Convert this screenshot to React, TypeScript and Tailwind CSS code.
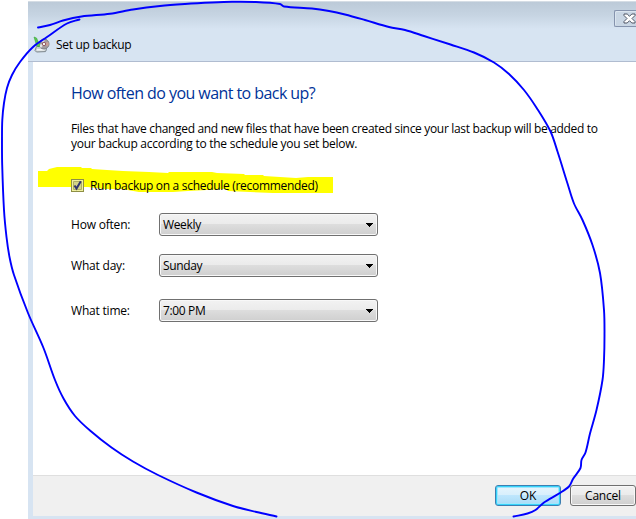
import React from "react";

type Point = [number, number];

const outerStroke: Point[] = [
  [38, 27.5], [50, 25], [63, 20.5], [81.5, 16.5], [110, 13.7], [133, 9.5], [160, 6], [185, 4], [212, 2.5],
  [232, 1.8], [255, 2], [280, 4], [284, 6.5], [312, 8.5], [329, 11], [345, 14.5], [365, 20], [389, 27],
  [405, 30], [424, 36], [450.5, 44.5], [474, 52.5], [494, 62.5], [509, 74], [524, 90], [537, 108.5],
  [550.5, 131.5], [557.5, 151.5], [567.5, 183.5], [574, 203.5], [582.5, 220], [592.5, 245], [600, 273],
  [604, 310], [604.5, 335], [604, 360], [602.5, 380], [596.5, 410], [590, 433.5], [585.5, 452.5],
  [581.5, 460], [580.5, 468], [573, 479], [569, 486.5], [559, 493.5], [544, 502.5], [535.5, 510],
  [527.5, 513.5], [513.5, 516.5],
];

const innerStroke: Point[] = [
  [79.5, 19.5], [67, 23.5], [47, 37], [33, 47], [20, 62], [12, 75], [7, 88], [4, 103], [2.3, 120],
  [2, 140], [2.2, 165], [4, 210], [6.5, 237], [9.5, 257], [14, 275], [28, 313], [43.5, 348], [55, 380],
  [63.5, 398.5], [75, 416], [90, 430.5], [111.5, 447.5], [133, 461.5], [158, 475], [196.5, 492.5],
  [233, 506], [256.5, 512], [276.5, 516.5],
];

/* Smooth curve running through every point of the pen stroke. */
function smooth(points: Point[]) {
  let d = `M${points[0][0]} ${points[0][1]}`;
  for (let i = 0; i < points.length - 1; i++) {
    const a = points[Math.max(i - 1, 0)];
    const b = points[i];
    const c = points[i + 1];
    const e = points[Math.min(i + 2, points.length - 1)];
    const len = Math.hypot(c[0] - b[0], c[1] - b[1]);
    const t1 = len / (len + Math.hypot(b[0] - a[0], b[1] - a[1])) / 3;
    const t2 = len / (len + Math.hypot(e[0] - c[0], e[1] - c[1])) / 3;
    d += ` C${b[0] + (c[0] - a[0]) * t1} ${b[1] + (c[1] - a[1]) * t1} ${c[0] - (e[0] - b[0]) * t2} ${c[1] - (e[1] - b[1]) * t2} ${c[0]} ${c[1]}`;
  }
  return d;
}

function BackupIcon() {
  return (
    <svg width="17" height="17" viewBox="0 0 17 17" className="block shrink-0">
      <path d="M3.5 10.5 L12.5 10 L13.5 13.5 L12.5 15.6 L3.5 16 L2 14.5 Z" fill="#cdd3d5" stroke="#7c868c" strokeWidth="1" />
      <path d="M4 13.8 H11.5" stroke="#f8fafa" strokeWidth="1.4" />
      <circle cx="11" cy="8" r="5" fill="#a39da0" stroke="#7b7f86" strokeWidth="1" />
      <path d="M11 8 L7.8 4 A5 5 0 0 1 11.5 3.2 Z" fill="#d9d9de" />
      <path d="M11 8 L15.2 5.5 A5 5 0 0 1 15 10.5 Z" fill="#c9a096" />
      <path d="M11 8 L8 12 A5 5 0 0 1 6 8.5 Z" fill="#dfe1e4" />
      <circle cx="11" cy="8" r="1.7" fill="#f4f4f5" stroke="#8b4f58" strokeWidth="0.9" />
      <path d="M1 1 L3.5 2 L5.5 6.5 L7 6 L6.2 11 L1.8 8.6 L3.2 8 Z" fill="#5cc84f" stroke="#36a33a" strokeWidth="0.6" />
    </svg>
  );
}

function Select({ value }: { value: string }) {
  return (
    <button className="flex h-[23px] w-[219px] items-center justify-between rounded-[3px] border border-[#707070] bg-[linear-gradient(#f2f2f2_0%,#ebebeb_48%,#dddddd_50%,#cfcfcf_100%)] pr-[4px] pl-[3px] shadow-[inset_0_0_0_1px_#f8f8f8]">
      <span className="tracking-[-0.35px] whitespace-nowrap">{value}</span>
      <svg width="7" height="4" viewBox="0 0 7 4" shapeRendering="crispEdges" className="mt-px">
        <path d="M0 0h7v1h-1v1h-1v1h-1v1h-1v-1h-1v-1h-1v-1h-1z" fill="#000" />
      </svg>
    </button>
  );
}

function Field({ label, value }: { label: string; value: string }) {
  return (
    <div className="flex h-[23px] items-center">
      <span className="w-[88px] whitespace-nowrap">{label}</span>
      <Select value={value} />
    </div>
  );
}

export default function App() {
  return (
    <div className="relative h-[519px] w-[636px] overflow-hidden bg-white pt-px pl-7 font-['Open_Sans','Noto_Sans',sans-serif] text-[12px] leading-[15px] tracking-[-0.2px] text-black">
      <div className="flex h-[518px] flex-col bg-[#d7e4f2] pb-[3px] pl-[5px]">
        <header className="-ml-[5px] flex h-[61px] flex-col border-t border-b border-t-[#d5dde5] border-b-[#b0bcd0] bg-[linear-gradient(#bccad8_0px,#c6d4e2_13px,#d7e4f2_27px)]">
          <div className="flex h-[34px] justify-end pt-2">
            <button className="flex h-[17px] w-[22px] items-center overflow-hidden rounded-l-[2px] border border-r-0 border-[#8593ad] bg-[#c9d6e4] pl-[8px] shadow-[inset_1px_1px_0_#dbe5ef]">
              <svg width="13" height="11" viewBox="0 0 13 11" className="shrink-0">
                <path d="M1 1 H4.2 L6.5 3.3 L8.8 1 H12 V2.5 L9 5.5 L12 8.5 V10 H8.8 L6.5 7.7 L4.2 10 H1 V8.5 L4 5.5 L1 2.5 Z" fill="#fff" stroke="#4e5564" strokeWidth="1" />
              </svg>
            </button>
          </div>
          <div className="flex items-center gap-[6px] pl-[5px]">
            <BackupIcon />
            <span className="tracking-[-0.3px]">Set up backup</span>
          </div>
        </header>

        <main className="h-[413px] bg-white pt-[21px] pl-[38px]">
          <h1 className="h-[22px] text-[16px] leading-[20px] tracking-[-0.56px] whitespace-nowrap text-[#003399]">
            How often do you want to back up?
          </h1>
          <p className="mt-4 h-[30px] whitespace-nowrap">
            <span className="block tracking-[-0.325px]">
              Files that have changed and new files that have been created since your last backup will be added to
            </span>
            <span className="block tracking-[-0.26px]">your backup according to the schedule you set below.</span>
          </p>
          <div className="relative mt-[27px] flex h-[15px] items-center">
            <svg width="296" height="27" viewBox="0 0 296 27" className="absolute top-[-11px] left-[-33px]">
              <path d="M0 4 L9 4 L11 2 L19 0 L43 0 L44 1 L53 1 L54 2 L69 3 L85 4 L111 5 L130 6 L131 5 L174 5 L179 6 L206 7 L207 8 L225 8 L226 9 L258 11 L270 10 L295 10 L295 26 L235 26 L212 25 L190 24 L188 22 L150 24 L135 25 L101 25 L84 22 L67 22 L50 20 L0 20 Z" fill="#ffff00" />
            </svg>
            <span className="relative flex size-[13px] items-center justify-center border border-[#8e8f45] bg-[#f0f0a0]">
              <svg width="11" height="11" viewBox="0 0 11 11">
                <path d="M1.5 1.5 H9.5 V9.5 H1.5 Z" fill="#d4d488" stroke="#b0b060" strokeWidth="1" />
                <path d="M2.5 5.5 L4.5 8.5 L8.8 1.2" fill="none" stroke="#31346f" strokeWidth="2" />
              </svg>
            </span>
            <span className="relative ml-[6px] tracking-[-0.3px] whitespace-nowrap">Run backup on a schedule (recommended)</span>
          </div>
          <div className="mt-5">
            <Field label="How often:" value="Weekly" />
            <div className="h-[18px]" />
            <Field label="What day:" value="Sunday" />
            <div className="h-[22px]" />
            <Field label="What time:" value="7:00 PM" />
          </div>
        </main>

        <footer className="flex h-[41px] justify-end gap-[9px] border-t border-[#dfdfdf] bg-[#f0f0f0] pt-[9px]">
          <button className="h-[21px] w-[66px] rounded-[3px] border border-[#3c7fb1] bg-[linear-gradient(#e6f5fd_0%,#d8effc_48%,#bee6fd_50%,#a9dbf6_100%)] leading-[19px] shadow-[inset_0_0_0_1px_#35d3fb,inset_0_0_0_2px_#a0e6fc]">
            OK
          </button>
          <button className="h-[21px] w-[66px] rounded-[3px] border border-[#707070] bg-[linear-gradient(#f2f2f2_0%,#ebebeb_48%,#dddddd_50%,#cfcfcf_100%)] leading-[19px] shadow-[inset_0_0_0_1px_#f8f8f8]">
            Cancel
          </button>
        </footer>
      </div>

      <svg width="636" height="519" viewBox="0 0 636 519" className="pointer-events-none absolute inset-0">
        <g fill="none" stroke="#0000ff" strokeWidth="1.9" strokeLinecap="round" strokeLinejoin="round">
          <path d={smooth(outerStroke)} />
          <path d={smooth(innerStroke)} />
        </g>
      </svg>
    </div>
  );
}
